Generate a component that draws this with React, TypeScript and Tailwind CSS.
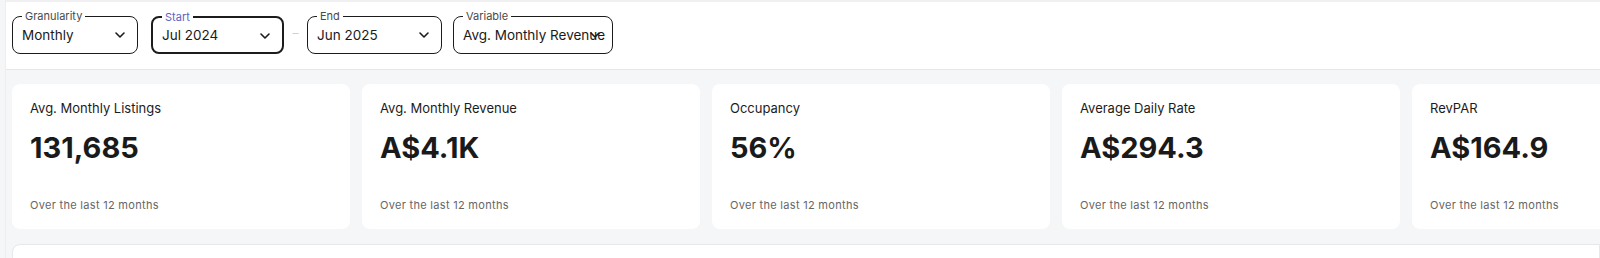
import { ChevronDown } from 'lucide-react';

const stats = [
  { label: 'Avg. Monthly Listings', value: '131,685' },
  { label: 'Avg. Monthly Revenue', value: 'A$4.1K' },
  { label: 'Occupancy', value: '56%' },
  { label: 'Average Daily Rate', value: 'A$294.3' },
  { label: 'RevPAR', value: 'A$164.9' },
];

function Select({
  label,
  value,
  width,
  active = false,
}: {
  label: string;
  value: string;
  width: string;
  active?: boolean;
}) {
  return (
    <div
      className={`relative h-[38px] rounded-[8px] bg-white shrink-0 ${width} ${
        active ? 'border-[2px] border-[#1c1c1c]' : 'border-[1.5px] border-[#1c1c1c]'
      }`}
    >
      <span
        className={`absolute -top-[8px] left-[9px] px-[3px] bg-white text-[11px] leading-[14px] ${
          active ? 'text-[#5b63c6]' : 'text-[#4a4a4a]'
        }`}
      >
        {label}
      </span>
      <div className="flex items-center h-full pl-[9px] pr-[6px]">
        <span className="text-[13.5px] text-[#1a1a1a] whitespace-nowrap">{value}</span>
      </div>
      <ChevronDown size={16} strokeWidth={2.4} className="absolute right-[9px] top-[10px] text-[#1a1a1a]" />
    </div>
  );
}

export default function App() {
  return (
    <div className="w-[1600px] h-[258px] bg-[#f5f6f8] overflow-hidden font-['Inter','Liberation_Sans',sans-serif]">
      <div className="ml-[5px] h-full border-l border-[#eceef1]">
        {/* Filters */}
        <div className="h-[70px] bg-white border-t-[2px] border-t-[#f0f0f2] border-b border-b-[#e4e6ea] flex items-start pt-[14px] pl-[6px]">
          <Select label="Granularity" value="Monthly" width="w-[126px]" />
          <div className="ml-[13px]">
            <Select label="Start" value="Jul 2024" width="w-[133px]" active />
          </div>
          <span className="w-[23px] text-center self-center -mt-[20px] text-[#cfcfcf] text-[12px]">–</span>
          <Select label="End" value="Jun 2025" width="w-[135px]" />
          <div className="ml-[11px]">
            <Select label="Variable" value="Avg. Monthly Revenue" width="w-[160px]" />
          </div>
        </div>

        {/* Stats */}
        <div className="flex gap-[12px] pl-[6px] pt-[14px]">
          {stats.map((s) => (
            <div key={s.label} className="w-[338px] h-[145px] shrink-0 bg-white rounded-[8px] px-[18px] pt-[15px] pb-[17px] flex flex-col">
              <div className="text-[13px] text-[#1c1c1c] leading-[18px]">{s.label}</div>
              <div className="mt-[14px] text-[29px] font-bold text-[#1a1a1a] leading-[34px]">{s.value}</div>
              <div className="mt-auto text-[11px] text-[#666] tracking-[0.3px] leading-[14px]">Over the last 12 months</div>
            </div>
          ))}
        </div>

        {/* Chart panel */}
        <div className="mt-[15px] ml-[6px] h-[40px] bg-white border border-[#e6e8ec] rounded-tl-[8px]" />
      </div>
    </div>
  );
}
